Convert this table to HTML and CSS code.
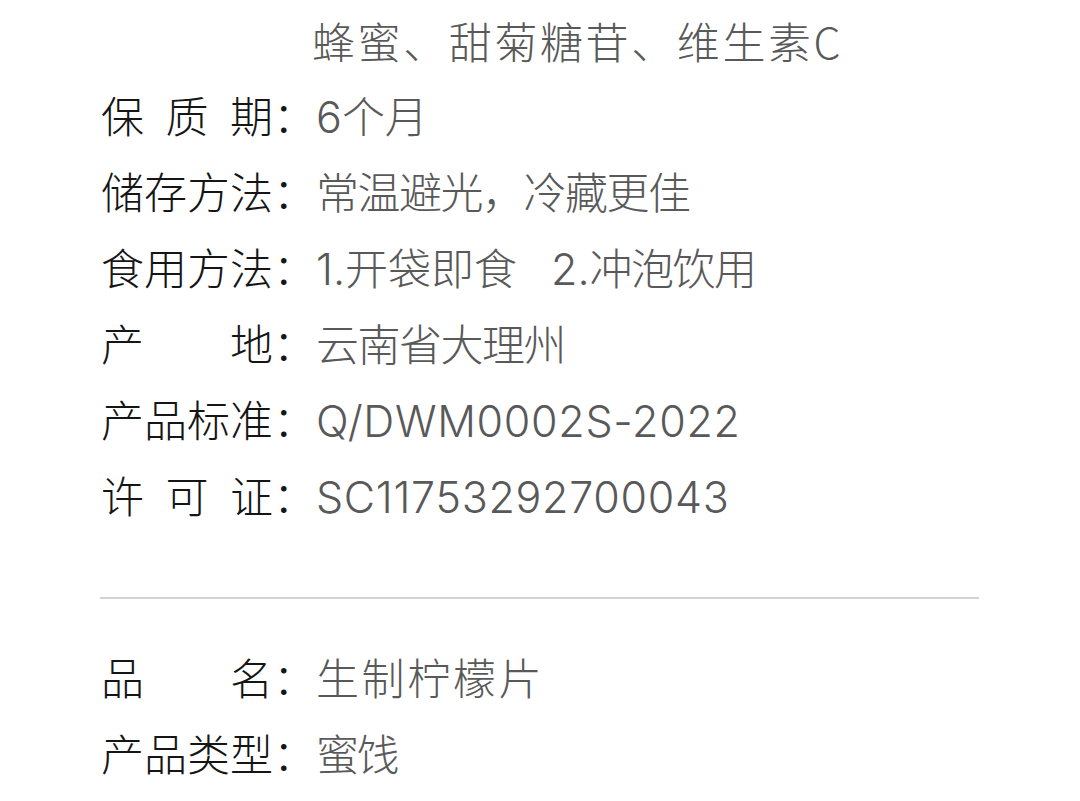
FILE: index.html
```html
<!DOCTYPE html>
<html lang="zh-CN">
<head>
<meta charset="utf-8">
<title>产品信息</title>
<link rel="stylesheet" href="styles.css">
</head>
<body>
<div class="page">
  <section class="info">
    <div class="row first"><span class="label blank"></span><span class="value wide lead">蜂蜜、甜菊糖苷、维生素C</span></div>
    <div class="row"><span class="label">保质期</span><span class="colon">：</span><span class="value"><span class="latin">6</span>个月</span></div>
    <div class="row"><span class="label">储存方法</span><span class="colon">：</span><span class="value tight">常温避光，冷藏更佳</span></div>
    <div class="row"><span class="label">食用方法</span><span class="colon">：</span><span class="value"><span class="latin">1.</span>开袋即食<span class="sep"></span><span class="latin">2.</span><span class="snug">冲泡饮用</span></span></div>
    <div class="row"><span class="label">产地</span><span class="colon">：</span><span class="value tight">云南省大理州</span></div>
    <div class="row"><span class="label">产品标准</span><span class="colon">：</span><span class="value latin code">Q/DWM0002S-2022</span></div>
    <div class="row"><span class="label">许可证</span><span class="colon">：</span><span class="value latin code">SC11753292700043</span></div>
  </section>
  <hr class="divider">
  <section class="info second">
    <div class="row"><span class="label">品名</span><span class="colon">：</span><span class="value wide">生制柠檬片</span></div>
    <div class="row"><span class="label">产品类型</span><span class="colon">：</span><span class="value tighter">蜜饯</span></div>
  </section>
</div>
</body>
</html>
```

FILE: styles.css
```css
html, body {
  margin: 0;
  padding: 0;
  background: #ffffff;
}

.page {
  width: 1080px;
  height: 801px;
  overflow: hidden;
  padding: 5px 101px 0 101px;
  box-sizing: border-box;
  font-family: "Noto Sans CJK SC", "Noto Sans", sans-serif;
  font-size: 43px;
  font-weight: 300;
}

.info {
  display: flex;
  flex-direction: column;
}

.row {
  display: flex;
  align-items: baseline;
  line-height: 76px;
  height: 76px;
  white-space: nowrap;
}

.row.first {
  height: 71px;
  line-height: 71px;
}

.label {
  width: 4em;
  flex: none;
  color: #151515;
  text-align: justify;
  text-align-last: justify;
}

.label.blank {
  width: 5em;
}

.colon {
  width: 1em;
  flex: none;
  color: #151515;
}

.value {
  color: #595959;
}

.value.wide {
  letter-spacing: 2.6px;
}

.value.lead {
  margin-left: -4px;
}

.value.tight {
  letter-spacing: -1.5px;
}

.value.tighter {
  letter-spacing: -2.5px;
}

.snug {
  letter-spacing: -1.5px;
}

.sep {
  display: inline-block;
  width: 34px;
}

.latin {
  font-family: "Inter", "Noto Sans CJK SC", sans-serif;
  font-weight: 300;
}

.code {
  letter-spacing: 0.7px;
}

.divider {
  border: 0;
  height: 2px;
  background: #d2d2d2;
  margin: 65px 0 0 -1px;
}

.second {
  margin-top: 39px;
}
```
